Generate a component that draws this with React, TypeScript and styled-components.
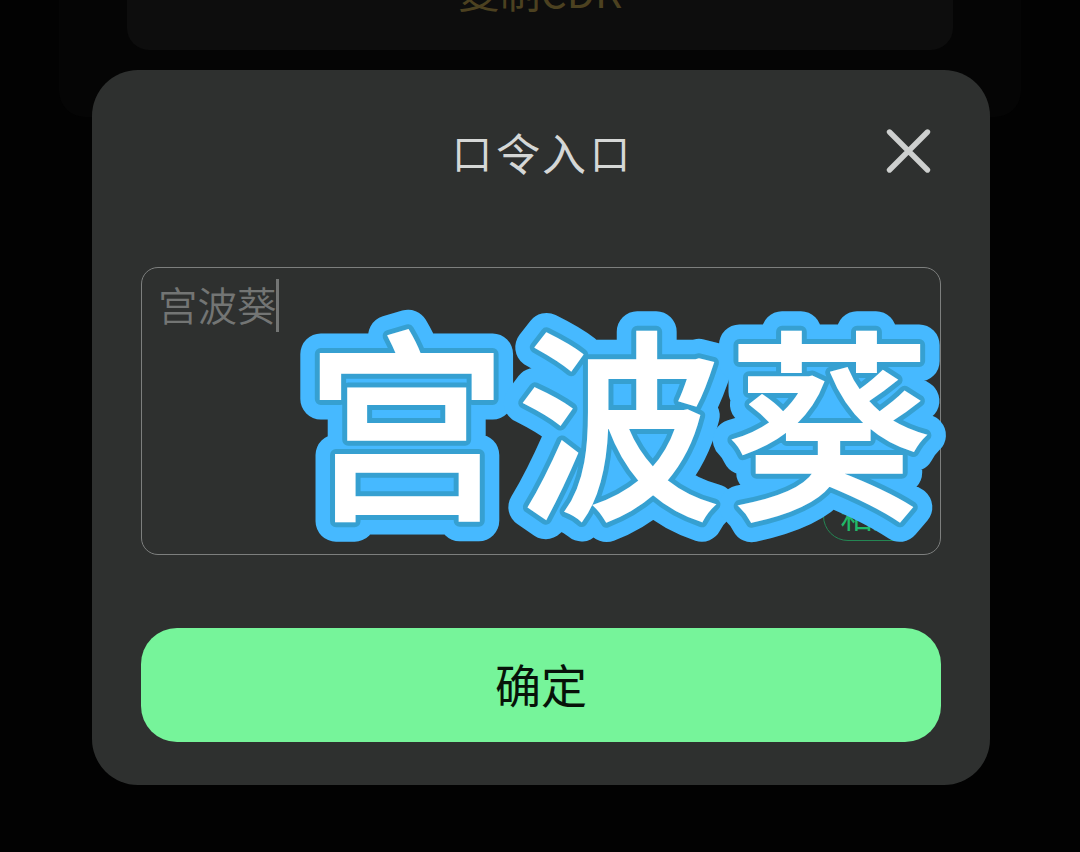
import React from "react";
import styled, { createGlobalStyle } from "styled-components";

const GlobalStyle = createGlobalStyle`
  * { box-sizing: border-box; }
  body {
    margin: 0;
    background: #020202;
    font-family: "Noto Sans CJK SC", sans-serif;
  }
`;

const Screen = styled.main`
  position: relative;
  width: 1080px;
  height: 852px;
  overflow: hidden;
  background: #020202;
  display: flex;
  justify-content: center;
`;

const PagePanel = styled.section`
  width: 962px;
  height: 117px;
  padding: 0 68px;
  background: #050505;
  border-radius: 0 0 26px 26px;
`;

const CopyCard = styled.div`
  height: 50px;
  border-radius: 0 0 22px 22px;
  background: #0d0d0d;
  color: #4c4120;
  font-size: 41px;
  text-align: center;
  display: flex;
  align-items: flex-end;
  justify-content: center;
`;

const CopyLabel = styled.span`
  line-height: 58px;
  padding-bottom: 31px;
`;

const Dialog = styled.section`
  position: absolute;
  left: 92px;
  top: 70px;
  width: 897.5px;
  height: 715px;
  padding: 0 48.5px 0 49px;
  border-radius: 46px;
  background: #2e302f;
  display: flex;
  flex-direction: column;
`;

const Header = styled.header`
  height: 197px;
  padding-top: 54px;
  display: grid;
  grid-template-columns: 60px 1fr 60px;
`;

const Title = styled.h1`
  grid-column: 2;
  margin: 0;
  display: flex;
  justify-content: center;
  align-items: flex-start;
  font-size: 44px;
  line-height: 56px;
  font-weight: 400;
  color: #d5d7d6;
`;

const TitleChar = styled.span<{ $small?: boolean }>`
  width: 46px;
  text-align: center;
  font-size: ${(p) => (p.$small ? "40px" : "44px")};
`;

const CloseButton = styled.button`
  width: 48px;
  height: 48px;
  margin: 2px 0 0 3px;
  padding: 0;
  border: 0;
  background: none;
  color: #cdcfce;

  svg { display: block; }
`;

const CodeField = styled.div`
  position: relative;
  height: 288px;
  padding: 11px 16px;
  border: 1px solid #7d7f7e;
  border-radius: 17px;
  display: flex;
  align-items: flex-start;
`;

const CodeValue = styled.span`
  margin-top: -2px;
  font-size: 39.5px;
  line-height: 54px;
  font-weight: 350;
  color: #737574;
`;

const Caret = styled.i`
  width: 3px;
  height: 53px;
  margin-left: -1px;
  background: #737574;
`;

const PasteButton = styled.button`
  position: absolute;
  right: 18px;
  bottom: 13px;
  width: 99px;
  height: 50px;
  padding: 0 0 4px;
  border: 1px solid #248653;
  border-radius: 25px;
  background: none;
  color: #20b868;
  font: 400 32px/44px "Noto Sans CJK SC", sans-serif;
`;

const ConfirmButton = styled.button`
  height: 114px;
  margin-top: 73px;
  padding: 0 0 4px;
  border: 0;
  border-radius: 36px;
  background: #76f49a;
  color: #071209;
  font: 400 46px/60px "Noto Sans CJK SC", sans-serif;
`;

const Sticker = styled.svg`
  position: absolute;
  left: 290px;
  top: 290px;
  width: 670px;
  height: 270px;
  overflow: visible;
  font-family: "Noto Sans CJK SC", sans-serif;
  font-size: 203px;
  font-weight: 500;
  text-anchor: middle;
  paint-order: stroke;
`;

const layers = [
  { color: "#46b9ff", width: 41, join: "round" },
  { color: "#36a0d1", width: 12, join: "round" },
  { color: "#ffffff", width: 2, join: "miter" },
] as const;

export default function App() {
  return (
    <>
      <GlobalStyle />
      <Screen>
        <PagePanel>
          <CopyCard><CopyLabel>复制CDK</CopyLabel></CopyCard>
        </PagePanel>
        <Dialog role="dialog">
          <Header>
            <Title>
              <TitleChar $small>口</TitleChar>
              <TitleChar>令</TitleChar>
              <TitleChar>入</TitleChar>
              <TitleChar $small>口</TitleChar>
            </Title>
            <CloseButton aria-label="关闭">
              <svg width="48" height="48" viewBox="0 0 48 48" fill="none" stroke="currentColor" strokeWidth="5.4" strokeLinecap="round">
                <path d="M5.5 6 43.5 44M43.5 6 5.5 44" />
              </svg>
            </CloseButton>
          </Header>
          <CodeField>
            <CodeValue>宫波葵</CodeValue>
            <Caret />
            <PasteButton>粘贴</PasteButton>
          </CodeField>
          <ConfirmButton>确定</ConfirmButton>
        </Dialog>
        <Sticker viewBox="290 290 670 270">
          {layers.map((layer) => (
            <text
              key={layer.color}
              x="406.5 619 829"
              y="504"
              fill={layer.color}
              stroke={layer.color}
              strokeWidth={layer.width}
              strokeLinejoin={layer.join}
            >
              宫波葵
            </text>
          ))}
        </Sticker>
      </Screen>
    </>
  );
}
